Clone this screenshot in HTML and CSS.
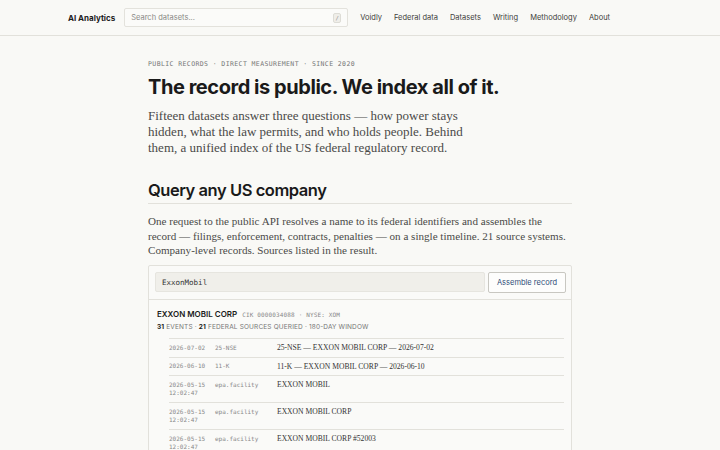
FILE: index.html
```html
<!DOCTYPE html>
<html lang="en">
<head>
<meta charset="utf-8">
<title>AI Analytics</title>
<link rel="stylesheet" href="styles.css">
</head>
<body>
<header class="site-header">
  <div class="header-inner">
    <a class="brand" href="#">AI Analytics</a>
    <label class="search">
      <span class="search-placeholder">Search datasets...</span>
      <kbd class="search-key">/</kbd>
    </label>
    <nav class="nav">
      <a href="#">Voidly</a>
      <a href="#">Federal data</a>
      <a href="#">Datasets</a>
      <a href="#">Writing</a>
      <a href="#">Methodology</a>
      <a href="#">About</a>
    </nav>
  </div>
</header>
<main class="page">
  <p class="eyebrow">PUBLIC RECORDS · DIRECT MEASUREMENT · SINCE 2020</p>
  <h1 class="title">The record is public. We index all of it.</h1>
  <p class="lede">Fifteen datasets answer three questions — how power stays hidden, what the law permits, and who holds people. Behind them, a unified index of the US federal regulatory record.</p>

  <h2 class="section-title">Query any US company</h2>
  <p class="section-text">One request to the public API resolves a name to its federal identifiers and assembles the record — filings, enforcement, contracts, penalties — on a single timeline. 21 source systems. Company-level records. Sources listed in the result.</p>

  <section class="panel">
    <div class="query">
      <div class="query-input">ExxonMobil</div>
      <button class="query-btn">Assemble record</button>
    </div>
    <div class="result">
      <div class="entity">
        <span class="entity-name">EXXON MOBIL CORP</span>
        <span class="entity-ids">CIK 0000034088 · NYSE: XOM</span>
      </div>
      <div class="entity-meta"><b>31</b> EVENTS · <b>21</b> FEDERAL SOURCES QUERIED · 180-DAY WINDOW</div>
      <div class="events">
        <div class="event">
          <div class="ev-date">2026-07-02</div>
          <div class="ev-type">25-NSE</div>
          <div class="ev-title">25-NSE — EXXON MOBIL CORP — 2026-07-02</div>
        </div>
        <div class="event">
          <div class="ev-date">2026-06-10</div>
          <div class="ev-type">11-K</div>
          <div class="ev-title">11-K — EXXON MOBIL CORP — 2026-06-10</div>
        </div>
        <div class="event">
          <div class="ev-date">2026-05-15<br>12:02:47</div>
          <div class="ev-type">epa.facility</div>
          <div class="ev-title">EXXON MOBIL</div>
        </div>
        <div class="event">
          <div class="ev-date">2026-05-15<br>12:02:47</div>
          <div class="ev-type">epa.facility</div>
          <div class="ev-title">EXXON MOBIL CORP</div>
        </div>
        <div class="event">
          <div class="ev-date">2026-05-15<br>12:02:47</div>
          <div class="ev-type">epa.facility</div>
          <div class="ev-title">EXXON MOBIL CORP #52003</div>
        </div>
      </div>
    </div>
  </section>
</main>
</body>
</html>
```
FILE: styles.css
```css
* { box-sizing: border-box; }
html, body { margin: 0; padding: 0; }
body {
  background: #f9f9f6;
  color: #1a1a1a;
  font-family: Inter, "Noto Sans", sans-serif;
}
a { color: inherit; text-decoration: none; }

.site-header {
  border-bottom: 1px solid #e2e1db;
  height: 36px;
}
.header-inner {
  width: 584px;
  margin: 0 auto;
  height: 35px;
  display: flex;
  align-items: center;
}
.brand {
  font-size: 8px;
  font-weight: 700;
  color: #1c1c1c;
  margin-right: 9px;
}
.search {
  width: 224px;
  height: 19px;
  background: #fbfbf9;
  border: 1px solid #e3e2dc;
  border-radius: 2px;
  display: flex;
  align-items: center;
  justify-content: space-between;
  padding: 0 6px 0 6px;
  margin-right: 12px;
}
.search-placeholder {
  font-size: 7.5px;
  color: #8a8a86;
}
.search-key {
  font-family: "DejaVu Sans Mono", monospace;
  font-size: 5.5px;
  color: #888;
  background: #efeee9;
  border: 1px solid #dddcd6;
  border-radius: 2px;
  width: 8px;
  height: 10px;
  display: flex;
  align-items: center;
  justify-content: center;
}
.nav {
  display: flex;
  gap: 12px;
}
.nav a {
  font-size: 7.5px;
  color: #3e3e3c;
}

.page {
  width: 424px;
  margin: 0 auto;
  padding-top: 24px;
}
.eyebrow {
  margin: 0;
  font-family: "DejaVu Sans Mono", monospace;
  font-size: 6.5px;
  letter-spacing: 0.4px;
  color: #777;
}
.title {
  margin: 5px 0 0;
  font-size: 20px;
  font-weight: 700;
  letter-spacing: -0.45px;
  line-height: 28px;
  color: #1a1a1a;
}
.lede {
  margin: 7px 0 0;
  max-width: 330px;
  font-family: "Liberation Serif", serif;
  font-size: 13px;
  line-height: 16px;
  color: #4a4a48;
}
.section-title {
  margin: 24px 0 0;
  font-size: 16.5px;
  font-weight: 600;
  letter-spacing: -0.45px;
  line-height: 20px;
  padding-bottom: 3px;
  border-bottom: 1px solid #e2e1db;
  color: #1a1a1a;
}
.section-text {
  margin: 10px 0 0;
  font-family: "Liberation Serif", serif;
  font-size: 11.1px;
  line-height: 14.7px;
  color: #4a4a48;
}

.panel {
  margin-top: 7px;
  border: 1px solid #e2e1db;
  border-radius: 2px;
  background: #fafaf8;
}
.query {
  display: flex;
  align-items: flex-start;
  gap: 3px;
  padding: 6px 5px 6px 6px;
  border-bottom: 1px solid #e2e1db;
}
.query-input {
  flex: 1;
  height: 20px;
  background: #f0efea;
  border: 1px solid #e6e5df;
  border-radius: 2px;
  font-family: "DejaVu Sans Mono", monospace;
  font-size: 7.5px;
  color: #333;
  display: flex;
  align-items: center;
  padding-left: 6px;
}
.query-btn {
  height: 21px;
  padding: 0 8px;
  background: #fdfdfc;
  border: 1px solid #c8c7c1;
  border-radius: 2px;
  font-family: Inter, sans-serif;
  font-size: 7.5px;
  color: #2e4c78;
}
.result {
  padding: 9px 7px 0 8px;
}
.entity {
  display: flex;
  align-items: baseline;
  gap: 5px;
  line-height: 11px;
}
.entity-name {
  font-size: 8px;
  font-weight: 600;
  color: #1a1a1a;
}
.entity-ids {
  font-family: "DejaVu Sans Mono", monospace;
  font-size: 6px;
  color: #888;
  letter-spacing: 0.15px;
}
.entity-meta {
  margin-top: 3px;
  font-size: 6.5px;
  line-height: 9px;
  color: #777;
  letter-spacing: 0.15px;
}
.entity-meta b { color: #1a1a1a; font-weight: 700; }
.events {
  margin: 6px 0 0 12px;
  border-top: 1px solid #e2e1db;
}
.event {
  display: grid;
  grid-template-columns: 46px 62px 1fr;
  align-items: start;
  padding: 4px 0 4.5px 0;
  border-bottom: 1px solid #e2e1db;
}
.ev-date, .ev-type {
  font-family: "DejaVu Sans Mono", monospace;
  font-size: 6px;
  line-height: 8.5px;
  color: #888;
  padding-top: 0.5px;
}
.ev-title {
  font-family: "Liberation Serif", serif;
  font-size: 7.6px;
  line-height: 9px;
  color: #333;
}
```
